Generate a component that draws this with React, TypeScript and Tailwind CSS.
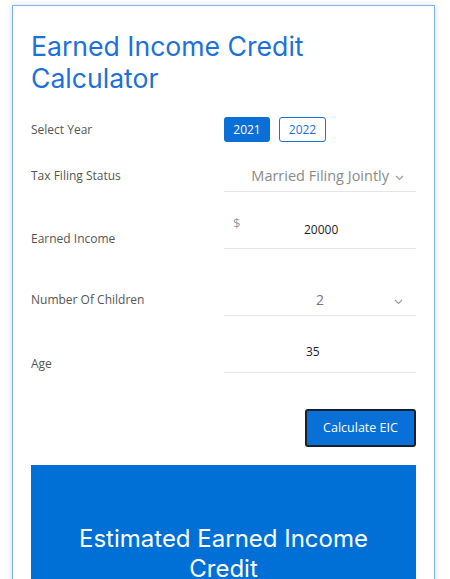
import React from "react";

const Chevron = () => (
  <svg width="9" height="6" viewBox="0 0 9 6" fill="none">
    <path d="M1 1 L4.5 4.5 L8 1" stroke="#9a9a9a" strokeWidth="1.1" />
  </svg>
);

export default function App() {
  const label = "text-[12px] text-[#555] leading-4";
  return (
    <div className="min-h-[579px] w-[450px] bg-white pt-[5px] pl-[12px] overflow-hidden" style={{ fontFamily: "'Open Sans', sans-serif" }}>
      <div className="w-[423px] h-[600px] border border-[#7fb2ee] bg-white shadow-[0_0_6px_rgba(0,0,0,0.15)] px-[18px] pt-[24px]">
        <h1 className="text-[26.6px] leading-[32px] text-[#1c71d8] font-normal" style={{ fontFamily: "Inter, sans-serif" }}>
          Earned Income Credit Calculator
        </h1>

        {/* Select year */}
        <div className="flex items-center mt-[23px] h-[25px]">
          <div className={`w-[193px] ${label}`}>Select Year</div>
          <div className="flex gap-[9px]">
            <button className="w-[46px] h-[25px] rounded-[3px] bg-[#0a6fd6] text-white text-[12px]">2021</button>
            <button className="w-[47px] h-[25px] rounded-[3px] border border-[#1c71d8] text-[#1c71d8] text-[12px] bg-white">2022</button>
          </div>
        </div>

        {/* Tax filing */}
        <div className="flex items-center mt-[18px] h-[32px]">
          <div className={`w-[193px] ${label}`}>Tax Filing Status</div>
          <div className="w-[192px] h-[32px] border-b border-[#e6e6e6] flex items-center justify-end pr-[12px] gap-[6px]">
            <span className="text-[14.5px] text-[#8a8a8a]">Married Filing Jointly</span>
            <span className="mt-[4px]"><Chevron /></span>
          </div>
        </div>

        {/* Earned income */}
        <div className="flex items-end mt-[18px] h-[39px]">
          <div className={`w-[193px] ${label} mb-[2px]`}>Earned Income</div>
          <div className="w-[192px] h-[39px] border-b border-[#e6e6e6] relative">
            <span className="absolute left-[9px] top-[4px] text-[13px] text-[#999]">$</span>
            <span className="absolute left-[80px] top-[11px] text-[12px] text-[#222]">20000</span>
          </div>
        </div>

        {/* Children */}
        <div className="flex items-center mt-[30px] h-[37px]">
          <div className={`w-[193px] ${label} mt-[5px]`}>Number Of Children</div>
          <div className="w-[192px] h-[37px] border-b border-[#e6e6e6] relative">
            <span className="absolute left-[92px] top-[10px] text-[14px] text-[#777]">2</span>
            <span className="absolute right-[13px] top-[20px]"><Chevron /></span>
          </div>
        </div>

        {/* Age */}
        <div className="flex items-end mt-[21px] h-[36px]">
          <div className={`w-[193px] ${label} mb-[1px]`}>Age</div>
          <div className="w-[192px] h-[36px] border-b border-[#e6e6e6] relative">
            <span className="absolute left-[82px] top-[6px] text-[12px] text-[#222]">35</span>
          </div>
        </div>

        <div className="flex justify-end mt-[36px]">
          <button className="w-[111px] h-[38px] rounded-[3px] bg-[#0870d6] border-2 border-[#1b1f2a] text-white text-[12.5px]">
            Calculate EIC
          </button>
        </div>

        <div className="mt-[18px] bg-[#0070d6] h-[200px] pt-[59px] text-center text-white text-[24px] leading-[30px] px-[30px]" style={{ fontFamily: "Inter, sans-serif" }}>
          Estimated Earned Income Credit
        </div>
      </div>
    </div>
  );
}
